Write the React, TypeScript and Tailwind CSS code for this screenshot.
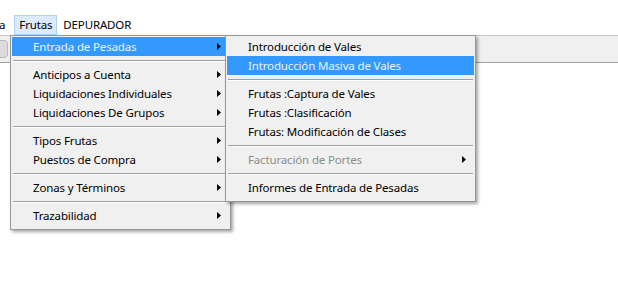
import React from "react";

type Item = { label?: string; sep?: boolean; sub?: boolean; active?: boolean; disabled?: boolean };

const mainItems: Item[] = [
  { label: "Entrada de Pesadas", sub: true, active: true },
  { sep: true },
  { label: "Anticipos a Cuenta", sub: true },
  { label: "Liquidaciones Individuales", sub: true },
  { label: "Liquidaciones De Grupos", sub: true },
  { sep: true },
  { label: "Tipos Frutas", sub: true },
  { label: "Puestos de Compra", sub: true },
  { sep: true },
  { label: "Zonas y Términos", sub: true },
  { sep: true },
  { label: "Trazabilidad", sub: true },
];

const subItems: Item[] = [
  { label: "Introducción de Vales" },
  { label: "Introducción Masiva de Vales", active: true },
  { sep: true },
  { label: "Frutas :Captura de Vales" },
  { label: "Frutas :Clasificación" },
  { label: "Frutas: Modificación de Clases" },
  { sep: true },
  { label: "Facturación de Portes", sub: true, disabled: true },
  { sep: true },
  { label: "Informes de Entrada de Pesadas" },
];

const Arrow = () => (
  <svg width="4" height="7" viewBox="0 0 4 7" className="shrink-0">
    <path d="M0 0 L4 3.5 L0 7 Z" fill="#000" />
  </svg>
);

const MenuList = ({ items }: { items: Item[] }) => (
  <div className="flex flex-col">
    {items.map((it, i) =>
      it.sep ? (
        <div key={i} className="h-[9px] flex flex-col justify-center px-px">
          <div className="border-t border-[#a0a0a0] border-b border-b-white" />
        </div>
      ) : (
        <div
          key={i}
          className={
            "h-[19px] flex items-center justify-between pl-[21px] pr-[8px] " +
            (it.active ? "bg-[#3399ff] text-[#eaf3ff]" : it.disabled ? "text-[#8d8d8d]" : "text-black")
          }
        >
          <span className="leading-none">{it.label}</span>
          {it.sub && <Arrow />}
        </div>
      )
    )}
  </div>
);

export default function App() {
  return (
    <div className="relative w-[618px] h-[286px] bg-white overflow-hidden text-[11.5px] tracking-[-0.15px] font-['Noto_Sans','Segoe_UI',sans-serif]">
      {/* barra de menú */}
      <div className="h-[35px] pt-[15px] flex items-start">
        <span className="-ml-[1px] pt-[1px] leading-[18px]">a</span>
        <div className="ml-[9px] h-[20px] px-[4px] bg-[#dcebfc] border border-[#b0d2f4] leading-[18px]">Frutas</div>
        <span className="ml-[6px] leading-[20px]">DEPURADOR</span>
      </div>

      {/* barra de herramientas */}
      <div className="h-[28px] bg-[#f0f0f0] border-t border-[#c8c8c8] border-b border-b-[#a0a0a0] flex items-center">
        <div className="w-[14px] h-[18px] ml-[-6px] bg-[#dcdcdc] border border-[#b8b8b8] rounded-sm" />
      </div>

      {/* menú principal */}
      <div className="absolute left-[10px] top-[35px] w-[221px] h-[195px] bg-[#f0f0f0] border border-[#979797] pt-px px-px shadow-[2px_2px_3px_rgba(0,0,0,0.35)]">
        <MenuList items={mainItems} />
      </div>

      {/* submenú */}
      <div className="absolute left-[225px] top-[35px] w-[251px] h-[167px] bg-[#f0f0f0] border border-[#979797] pt-px px-px shadow-[2px_2px_3px_rgba(0,0,0,0.35)]">
        <MenuList items={subItems} />
      </div>
    </div>
  );
}
